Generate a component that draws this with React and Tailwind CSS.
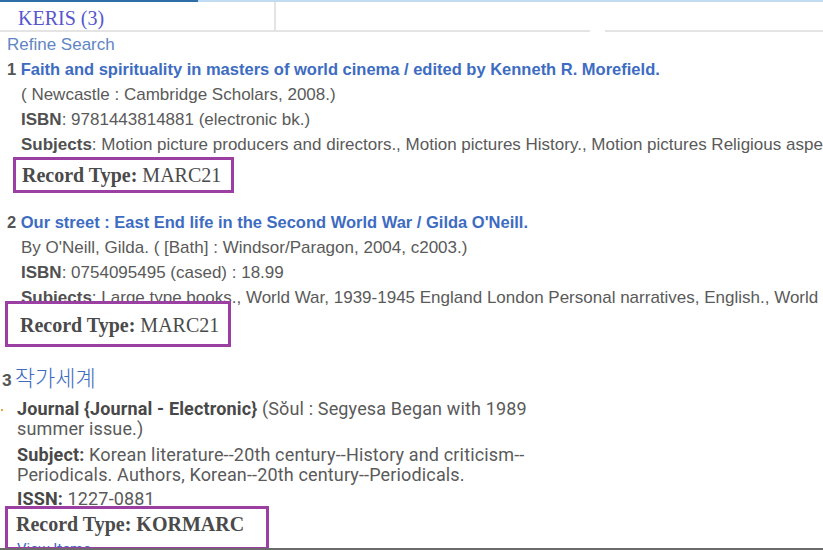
import React from "react";

const sans = { fontFamily: '"Liberation Sans", Arial, sans-serif' };

const RecordType = ({ value, bold, className }) => (
  <div
    className={`border-[3px] border-[#9c3fa3] font-['Liberation_Serif',serif] text-[20px] text-[#4a4a4a] leading-none ${className}`}
  >
    <span className="font-bold">Record Type:</span>{" "}
    <span className={bold ? "font-bold" : ""}>{value}</span>
  </div>
);

export default function App() {
  return (
    <div className="w-[823px] h-[550px] overflow-hidden bg-white relative" style={sans}>
      <div className="flex h-[2px]">
        <div className="w-[198px] bg-[#2f6fa8]" />
        <div className="flex-1 bg-[#bfdcf2]" />
      </div>

      <div className="flex h-[30px]">
        <div className="w-[276px] border-r-2 border-b-2 border-[#e4e4e4] pl-[18px] pt-[1px] font-['Liberation_Serif',serif] text-[20px] text-[#5656cf]">
          KERIS (3)
        </div>
        <div className="w-[314px] border-b-2 border-[#e4e4e4]" />
        <div className="w-[15px]" />
        <div className="flex-1 border-b-2 border-[#e4e4e4]" />
      </div>

      <div className="pl-[7px] pt-[3px] text-[17px] text-[#5f86c4] leading-[20px]">Refine Search</div>

      <div className="text-[17px] leading-[25px] text-[#5a5a5a] mt-[2px]">
        <div className="pl-[7px] font-bold text-[16.5px] text-[#3d6cc2] whitespace-nowrap">
          <span className="text-[#555]">1</span> Faith and spirituality in masters of world cinema / edited by Kenneth R. Morefield.
        </div>
        <div className="pl-[21px] whitespace-nowrap">( Newcastle : Cambridge Scholars, 2008.)</div>
        <div className="pl-[21px] whitespace-nowrap">
          <span className="font-bold text-[#505050]">ISBN</span>: 9781443814881 (electronic bk.)
        </div>
        <div className="pl-[21px] whitespace-nowrap h-[25px]">
          <span className="font-bold text-[#505050]">Subjects</span>: Motion picture producers and directors., Motion pictures History., Motion pictures Religious aspects.
        </div>
        <RecordType value="MARC21" className="ml-[13px] w-[221px] h-[36px] pl-[6px] pt-[5px]" />

        <div className="pl-[7px] font-bold text-[16.5px] text-[#3d6cc2] mt-[17px] whitespace-nowrap">
          <span className="text-[#555]">2</span> Our street : East End life in the Second World War / Gilda O'Neill.
        </div>
        <div className="pl-[21px] whitespace-nowrap">By O'Neill, Gilda. ( [Bath] : Windsor/Paragon, 2004, c2003.)</div>
        <div className="pl-[21px] whitespace-nowrap">
          <span className="font-bold text-[#505050]">ISBN</span>: 0754095495 (cased) : 18.99
        </div>
        <div className="pl-[21px] whitespace-nowrap h-[16px]">
          <span className="font-bold text-[#505050]">Subjects</span>: Large type books., World War, 1939-1945 England London Personal narratives, English., World War
        </div>
        <RecordType value="MARC21" className="ml-[5px] w-[226px] h-[46px] pl-[12px] pt-[11px] bg-white relative" />
      </div>

      <div className="mt-[14px] flex items-baseline">
        <span className="pl-[2px] text-[17px] font-bold text-[#555] font-['Roboto',sans-serif]">3</span>
        <span className="pl-[3px] text-[22px] text-[#3d6cc2] font-['Noto_Sans_CJK_KR',sans-serif] font-light leading-[30px]">작가세계</span>
      </div>

      <div className="relative pl-[17px] w-[542px] font-['Roboto',sans-serif] text-[18px] tracking-[0.15px] leading-[20px] text-[#5a5a5a] mt-[5px]">
        <span className="absolute left-[1px] top-[10px] w-[2px] h-[2px] bg-[#e8a040]" />
        <div>
          <span className="font-bold text-[#484848]">Journal {"{"}Journal - Electronic{"}"}</span> (Sŏul : Segyesa Began with 1989 summer issue.)
        </div>
        <div className="mt-[6px]">
          <span className="font-bold text-[#484848]">Subject:</span> Korean literature--20th century--History and criticism-- Periodicals. Authors, Korean--20th century--Periodicals.
        </div>
        <div className="mt-[4px]">
          <span className="font-bold text-[#484848]">ISSN:</span> 1227-0881
        </div>
      </div>

      <div className="relative -mt-[3px]">
        <RecordType value="KORMARC" bold className="ml-[5px] w-[264px] h-[44px] pl-[8px] pt-[5px] relative z-10" />
        <div className="absolute left-[17px] top-[33px] text-[15px] text-[#3d6cc2] font-['Roboto',sans-serif] leading-[20px]">View Items</div>
      </div>

      <div className="absolute left-0 right-0 bottom-0 h-[2px] bg-[#6b6b6b] z-20" />
    </div>
  );
}
